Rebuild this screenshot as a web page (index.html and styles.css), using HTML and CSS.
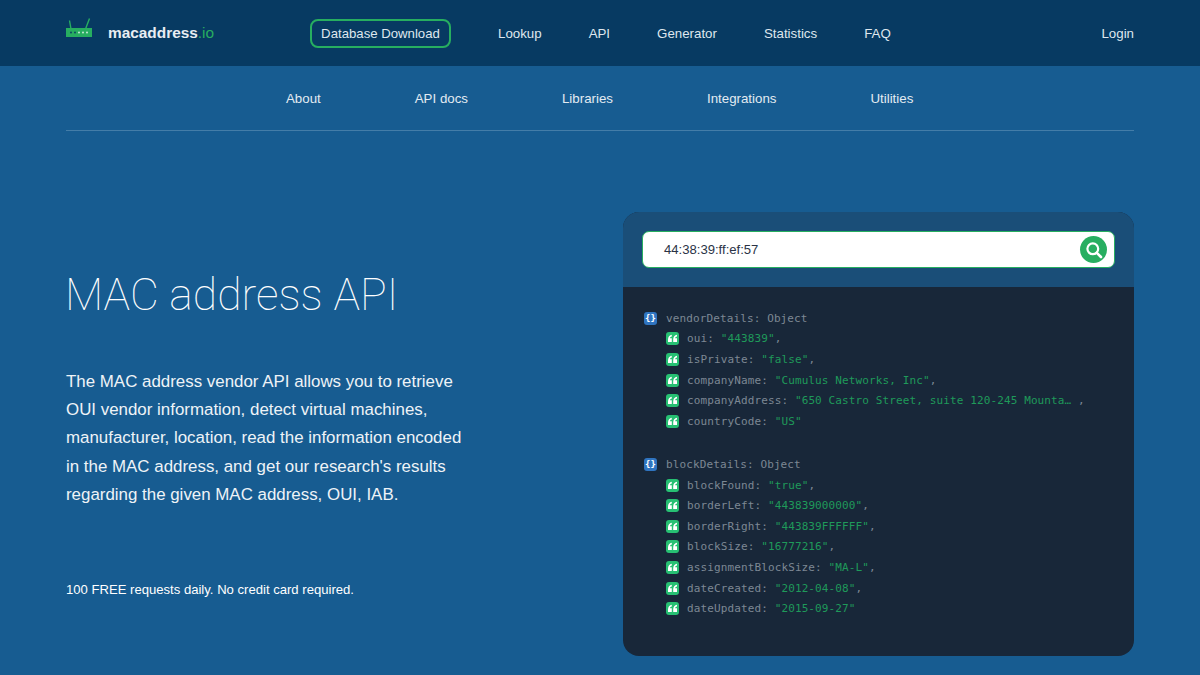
FILE: index.html
```html
<!DOCTYPE html>
<html lang="en">
<head>
  <meta charset="UTF-8">
  <meta name="viewport" content="width=device-width, initial-scale=1.0">
  <title>MAC address API</title>
  <link rel="stylesheet" href="styles.css">
</head>
<body>
  <!-- Top navigation -->
  <header class="top-bar">
    <div class="wrap top-nav">
      <a class="logo" href="#">
        <svg class="logo-icon" width="26" height="20" viewBox="0 0 26 20">
          <path d="M3.5 2.5 L5 11 M23.5 0.5 L19.5 11" stroke="#27ae60" stroke-width="1.4" fill="none"/>
          <rect x="0" y="10" width="26" height="9" fill="#27ae60"/>
          <g fill="#0a3c62">
            <circle cx="5" cy="14.5" r="0.9"/>
            <circle cx="9" cy="14.5" r="0.9"/>
          </g>
          <g fill="#d5efe0">
            <circle cx="13" cy="14.5" r="0.9"/>
            <circle cx="17" cy="14.5" r="0.9"/>
            <circle cx="21" cy="14.5" r="0.9"/>
          </g>
        </svg>
        <span class="logo-text">macaddress<span class="logo-tld">.io</span></span>
      </a>
      <a class="btn-download" href="#">Database Download</a>
      <nav class="main-links">
        <a href="#">Lookup</a>
        <a href="#">API</a>
        <a href="#">Generator</a>
        <a href="#">Statistics</a>
        <a href="#">FAQ</a>
      </nav>
      <a class="login" href="#">Login</a>
    </div>
  </header>

  <!-- Sub navigation -->
  <div class="wrap">
    <nav class="sub-nav">
      <a href="#">About</a>
      <a href="#">API docs</a>
      <a href="#">Libraries</a>
      <a href="#">Integrations</a>
      <a href="#">Utilities</a>
    </nav>
  </div>

  <main class="wrap hero">
    <section class="intro">
      <h1>MAC address API</h1>
      <p class="lead">The MAC address vendor API allows you to retrieve OUI vendor information, detect virtual machines, manufacturer, location, read the information encoded in the MAC address, and get our research's results regarding the given MAC address, OUI, IAB.</p>
      <p class="note">100 FREE requests daily. No credit card required.</p>
    </section>

    <section class="panel">
      <div class="search-band">
        <div class="search-box">
          <span class="search-value">44:38:39:ff:ef:57</span>
          <span class="search-btn">
            <svg width="18" height="18" viewBox="0 0 18 18">
              <circle cx="7.8" cy="7.8" r="5.4" fill="none" stroke="#fff" stroke-width="2.2"/>
              <path d="M11.8 11.8 L16 16" stroke="#fff" stroke-width="2.6" stroke-linecap="round"/>
            </svg>
          </span>
        </div>
      </div>
      <div class="code" id="code"></div>
    </section>
  </main>

  <script>
    const groups = [
      {
        name: 'vendorDetails',
        rows: [
          ['oui', '"443839"', ','],
          ['isPrivate', '"false"', ','],
          ['companyName', '"Cumulus Networks, Inc"', ','],
          ['companyAddress', '"650 Castro Street, suite 120-245 Mounta… ', ','],
          ['countryCode', '"US"', '']
        ]
      },
      {
        name: 'blockDetails',
        rows: [
          ['blockFound', '"true"', ','],
          ['borderLeft', '"443839000000"', ','],
          ['borderRight', '"443839FFFFFF"', ','],
          ['blockSize', '"16777216"', ','],
          ['assignmentBlockSize', '"MA-L"', ','],
          ['dateCreated', '"2012-04-08"', ','],
          ['dateUpdated', '"2015-09-27"', '']
        ]
      }
    ];

    const quoteIcon = '<svg class="tag tag-str" viewBox="0 0 13 13"><rect width="13" height="13" rx="3" fill="#27c073"/>' +
      '<path d="M5.8 2.8 C3.5 3.2 2 5 2 7.4 V10 H5.8 V6.2 H4 C4.1 5.3 4.8 4.8 5.8 4.6 Z M11 2.8 C8.7 3.2 7.2 5 7.2 7.4 V10 H11 V6.2 H9.2 C9.3 5.3 10 4.8 11 4.6 Z" fill="#fff"/></svg>';

    const code = document.getElementById('code');
    code.innerHTML = groups.map(group => `
      <div class="group">
        <div class="row">
          <span class="tag tag-obj">{}</span>
          <span class="key">${group.name}: Object</span>
        </div>
        ${group.rows.map(row => `
          <div class="row row-child">
            ${quoteIcon}
            <span class="key">${row[0]}: <span class="val">${row[1]}</span>${row[2]}</span>
          </div>
        `).join('')}
      </div>
    `).join('');
  </script>
</body>
</html>
```

FILE: styles.css
```css
* {
  box-sizing: border-box;
}
html, body {
  height: 100%;
}
body {
  margin: 0;
  overflow: hidden;
  background-color: #175c91;
  color: #fff;
  font-family: "Liberation Sans", Arial, sans-serif;
}
a {
  color: inherit;
  text-decoration: none;
}
.wrap {
  width: 1068px;
  margin: 0 auto;
}
.top-bar {
  height: 66px;
  background-color: #073a62;
}
.top-nav {
  height: 100%;
  display: flex;
  align-items: center;
  font-size: 13.3px;
  color: #dfe7ee;
}
.logo {
  width: 244px;
  display: flex;
  align-items: center;
  gap: 16px;
  margin-top: -1px;
}
.logo-icon {
  margin-top: -10px;
}
.logo-text {
  font-size: 15.4px;
  font-weight: bold;
  color: #e8edf2;
}
.logo-tld {
  font-weight: normal;
  color: #27ae60;
}
.btn-download {
  height: 29px;
  width: 141px;
  display: flex;
  align-items: center;
  justify-content: center;
  border: 2px solid #27ae60;
  border-radius: 8px;
  font-size: 13.2px;
}
.main-links {
  display: flex;
  gap: 47px;
  margin-left: 47px;
}
.login {
  margin-left: auto;
}
.sub-nav {
  height: 65px;
  display: flex;
  align-items: center;
  gap: 94px;
  padding-left: 220px;
  border-bottom: 1px solid #447da8;
  font-size: 13.3px;
  color: #e3ebf2;
}
.hero {
  display: flex;
  justify-content: space-between;
  padding-top: 81px;
}
.intro {
  width: 410px;
}
.intro h1 {
  margin: 57px 0 0 -1px;
  font-family: Roboto, sans-serif;
  font-size: 44.5px;
  font-weight: 100;
  line-height: 52px;
}
.lead {
  margin: 47px 0 0;
  font-size: 16.9px;
  line-height: 28.2px;
  color: #eef3f7;
}
.note {
  margin: 72px 0 0;
  font-size: 13.1px;
  line-height: 18px;
}
.panel {
  width: 511px;
  height: 444px;
  border-radius: 16px;
  overflow: hidden;
  background-color: #182739;
}
.search-band {
  height: 75px;
  padding: 19px;
  background-color: #1a4e78;
}
.search-box {
  height: 37px;
  display: flex;
  align-items: center;
  justify-content: space-between;
  padding: 0 0 0 21px;
  background-color: #fff;
  border: 1.5px solid #27ae60;
  border-radius: 7px;
  color: #2a3346;
  font-size: 13.1px;
}
.search-btn {
  width: 27px;
  height: 27px;
  display: flex;
  align-items: center;
  justify-content: center;
  margin-right: 7px;
  background-color: #27ae60;
  border-radius: 50%;
}
.code {
  padding: 21px 21px;
  font-family: "DejaVu Sans Mono", monospace;
  font-size: 11px;
  letter-spacing: 0.12px;
}
.group {
  margin-bottom: 22.6px;
}
.row {
  height: 20.6px;
  display: flex;
  align-items: center;
  gap: 9px;
}
.row-child {
  padding-left: 22px;
  gap: 8px;
}
.tag {
  flex: none;
  width: 13px;
  height: 13px;
}
.tag-obj {
  display: flex;
  align-items: center;
  justify-content: center;
  background-color: #2f74c0;
  border-radius: 3px;
  color: #fff;
  font-size: 9px;
  font-weight: bold;
  letter-spacing: 0;
}
.key {
  color: #7d8894;
  white-space: pre;
}
.val {
  color: #1f9a5a;
}
```
